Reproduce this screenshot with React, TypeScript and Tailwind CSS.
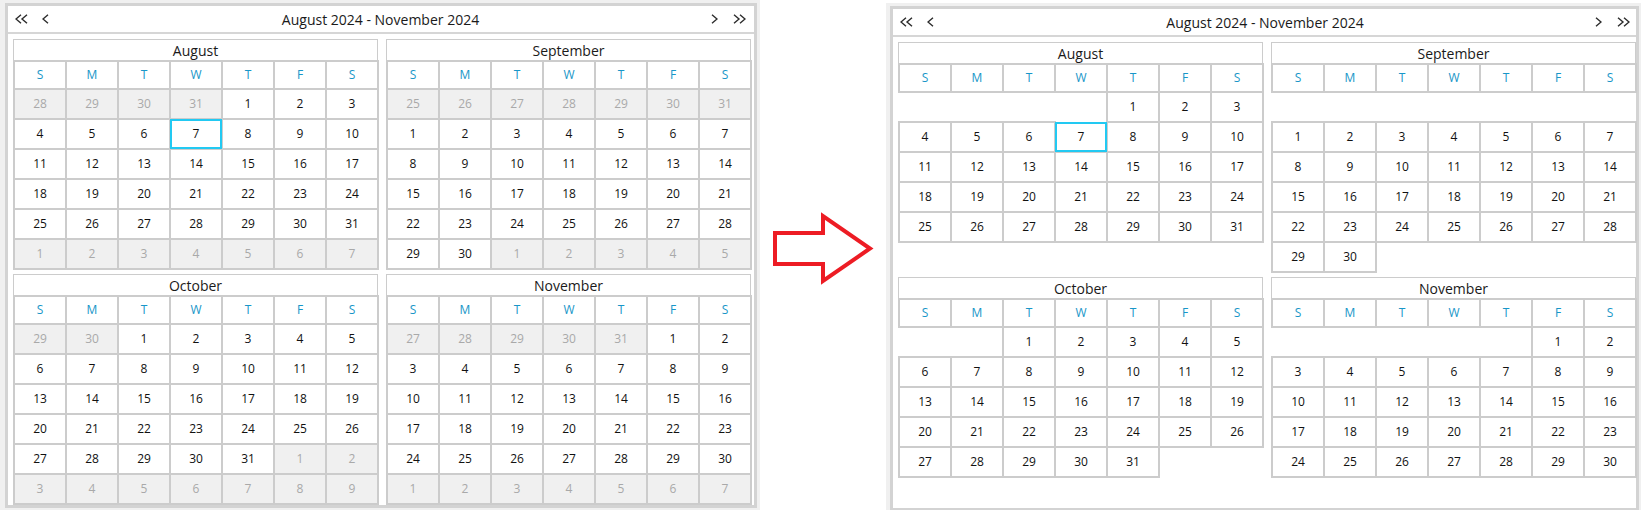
import React from 'react';

type Day = { d: number; inMonth: boolean; today: boolean };

const DOW = ['S', 'M', 'T', 'W', 'T', 'F', 'S'];
const MONTHS = [
  { name: 'August', m: 7 },
  { name: 'September', m: 8 },
  { name: 'October', m: 9 },
  { name: 'November', m: 10 },
];

// WPF style: always show a leading week, 6 rows of 7
function buildMonth(year: number, month: number): Day[] {
  const first = new Date(year, month, 1).getDay();
  const lead = first === 0 ? 7 : first;
  const days: Day[] = [];
  for (let i = 0; i < 42; i++) {
    const dt = new Date(year, month, 1 - lead + i);
    const inMonth = dt.getMonth() === month;
    days.push({ d: dt.getDate(), inMonth, today: inMonth && month === 7 && dt.getDate() === 7 });
  }
  return days;
}

const Chevron: React.FC<{ right?: boolean; double?: boolean }> = ({ right, double }) => {
  const one = (x: number) => (right ? `${x},0.8 ${x + 5},5 ${x},9.2` : `${x + 5},0.8 ${x},5 ${x + 5},9.2`);
  return (
    <svg width={double ? 13 : 7} height="10" viewBox={`0 0 ${double ? 13 : 7} 10`} fill="none" stroke="#2b2b2b" strokeWidth="1.4">
      <polyline points={one(1)} />
      {double && <polyline points={one(7)} />}
    </svg>
  );
};

const Month: React.FC<{ name: string; days: Day[]; hideOther: boolean }> = ({ name, days, hideOther }) => (
  <div className="w-[365px] flex flex-col">
    <div className="h-[22px] border border-[#cccccc] bg-white flex items-center justify-center text-[14px] text-[#1a1a1a]">
      {name}
    </div>
    <div className="grid grid-cols-[repeat(7,52px)] ml-[1px]">
      {DOW.map((d, i) => (
        <div
          key={'h' + i}
          className="h-[28px] border border-[#cccccc] outline outline-[#cccccc] bg-white flex items-center justify-center text-[12px] font-medium text-[#1896c8]"
        >
          {d}
        </div>
      ))}
      {days.map((day, i) => {
        if (!day.inMonth && hideOther) return <div key={i} className="h-[30px]" />;
        if (day.today)
          return (
            <div
              key={i}
              className="relative z-10 h-[30px] border-2 border-[#22c9f2] bg-white flex items-center justify-center text-[12px] text-[#111111]"
            >
              {day.d}
            </div>
          );
        return (
          <div
            key={i}
            className={`h-[30px] border border-[#cccccc] outline outline-[#cccccc] flex items-center justify-center text-[12px] ${
              day.inMonth ? 'bg-white text-[#111111]' : 'bg-[#f0f0f0] text-[#a9a9a9]'
            }`}
          >
            {day.d}
          </div>
        );
      })}
    </div>
  </div>
);

const Calendar: React.FC<{ hideOther: boolean; width: string; navPr: string }> = ({ hideOther, width, navPr }) => (
  <div className={`${width} h-[505px] border-[3px] border-[#d3d3d3] bg-white flex flex-col`}>
    <div className={`h-[28px] border-b-2 border-[#d6d6d6] grid grid-cols-[1fr_auto_1fr] items-center pl-[7px] ${navPr}`}>
      <div className="flex items-center gap-[14px]">
        <Chevron double />
        <Chevron />
      </div>
      <div className="text-[14px] text-[#1a1a1a]">August 2024 - November 2024</div>
      <div className="flex items-center justify-end gap-[15px]">
        <Chevron right />
        <Chevron right double />
      </div>
    </div>
    <div className="grid grid-cols-[365px_365px] gap-x-[8px] gap-y-[5px] pl-[5px] pt-[5px]">
      {MONTHS.map((mo) => (
        <Month key={mo.name} name={mo.name} days={buildMonth(2024, mo.m)} hideOther={hideOther} />
      ))}
    </div>
  </div>
);

const Arrow = () => (
  <svg width="106" height="78" viewBox="0 0 106 78" fill="white" stroke="#ed1c24" strokeWidth="4" strokeLinejoin="miter">
    <polygon points="5,23 53,23 53,6 100,38.5 53,71 53,54 5,54" />
  </svg>
);

export default function App() {
  return (
    <div className="flex w-[1641px] h-[510px] bg-white overflow-hidden font-['Open_Sans',sans-serif]">
      <div className="w-[760px] shrink-0 h-full bg-[#f0f0f0] pt-[3px] pl-[5px]">
        <Calendar hideOther={false} width="w-[752px]" navPr="pr-[8px]" />
      </div>
      <div className="w-[126px] shrink-0 flex justify-center pt-[210px]">
        <Arrow />
      </div>
      <div className="flex-1 mt-[3px] bg-[#f0f0f0] pt-[3px] pl-[4px]">
        <Calendar hideOther width="w-[749px]" navPr="pr-[6px]" />
      </div>
    </div>
  );
}
